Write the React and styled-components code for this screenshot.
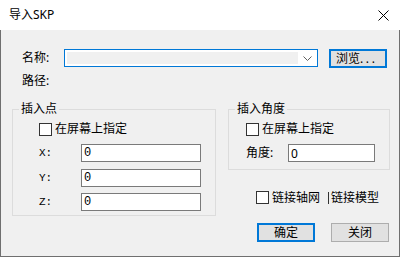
import React from 'react';
import styled, { createGlobalStyle } from 'styled-components';

const Global = createGlobalStyle`
  html, body { margin: 0; padding: 0; background: #ffffff; }
  body {
    font-family: "Noto Sans", "Noto Sans CJK SC", sans-serif;
    font-size: 12px;
    line-height: 16px;
    color: #000;
  }
  * { box-sizing: border-box; }
`;

const Window = styled.div`
  width: 400px;
  height: 257px;
  display: flex;
  flex-direction: column;
  background: #fff;
`;

const TitleBar = styled.div`
  height: 30px;
  flex: none;
  display: flex;
  align-items: center;
  justify-content: space-between;
  padding: 0 11px 0 9px;
  background: #fff;
`;

const Title = styled.div`
  font-size: 12px;
  line-height: 16px;
  margin-top: -1px;
`;

const Body = styled.div`
  flex: 1;
  background: #f0f0f0;
  border: 1px solid #6f6f6f;
  border-top: none;
  display: flex;
  flex-direction: column;
`;

const FileRow = styled.div`
  margin-top: 19px;
  padding-left: 21px;
  display: flex;
  align-items: flex-start;
  height: 19px;
`;

const Label = styled.div`
  width: ${p => p.$w || 42}px;
  flex: none;
  line-height: ${p => p.$lh || 16}px;
  font-family: ${p => (p.$mono ? '"Liberation Mono", "DejaVu Sans Mono", monospace' : 'inherit')};
  font-size: ${p => (p.$mono ? '11px' : '12px')};
`;

const Combo = styled.div`
  width: 254px;
  height: 18px;
  border: 1px solid #0078d7;
  background: #fff;
  display: flex;
  padding: 2px 0 2px 2px;
`;

const ComboField = styled.div`
  flex: 1;
  background: #f0f0f0;
`;

const ComboArrow = styled.div`
  width: 19px;
  display: flex;
  align-items: center;
  justify-content: center;
`;

const Button = styled.div`
  width: 58px;
  height: 19px;
  flex: none;
  display: flex;
  align-items: center;
  justify-content: ${p => (p.$left ? 'flex-start' : 'center')};
  padding-left: ${p => (p.$left ? 5 : 0)}px;
  background: #e1e1e1;
  border: ${p => (p.$focus ? '2px solid #0078d7' : '1px solid #adadad')};
  margin-left: ${p => p.$ml || 0}px;
  line-height: 16px;
`;

const Dots = styled.span`
  letter-spacing: 2.6px;
`;

const PathRow = styled.div`
  margin-top: 5px;
  padding-left: 21px;
  line-height: 16px;
`;

const GroupsRow = styled.div`
  margin-top: 12px;
  padding-left: 11px;
  display: flex;
  align-items: flex-start;
`;

const Group = styled.fieldset`
  margin: 0;
  width: ${p => p.$w}px;
  border: 1px solid #dcdcdc;
  padding: 0;
  min-inline-size: 0;
`;

const Legend = styled.legend`
  margin-left: 6px;
  padding: 0 2px;
  line-height: 16px;
  font-size: 12px;
`;

const GroupContent = styled.div`
  padding: 4px 0 ${p => p.$pb}px ${p => p.$pl}px;
`;

const CheckRow = styled.div`
  display: flex;
  align-items: center;
  height: ${p => p.$h || 16}px;
  margin-top: ${p => p.$mt || 0}px;
  padding-left: ${p => p.$pl || 0}px;
`;

const Box = styled.span`
  width: 13px;
  height: 13px;
  flex: none;
  border: 1px solid #333333;
  background: #fff;
  margin-right: 3px;
`;

const ClippedEdge = styled.span`
  width: 1px;
  height: 12px;
  flex: none;
  background: #333333;
  margin: 0 2px 0 8px;
`;

const FieldRow = styled.div`
  display: flex;
  align-items: center;
  margin-top: ${p => p.$mt}px;
`;

const Input = styled.input`
  width: ${p => p.$w}px;
  height: 18px;
  border: 1px solid #7a7a7a;
  background: #fff;
  padding: 0 0 0 2px;
  margin: 0;
  outline: none;
  font-family: ${p => (p.$mono ? '"Liberation Mono", "DejaVu Sans Mono", monospace' : '"Noto Sans", sans-serif')};
  font-size: 12px;
  color: #000;
`;

const RightColumn = styled.div`
  display: flex;
  flex-direction: column;
  margin-left: 12px;
`;

const ButtonRow = styled.div`
  display: flex;
  margin-top: 18px;
  padding-left: 29px;
`;

const CloseIcon = () => (
  <svg width="11" height="11" viewBox="0 0 11 11">
    <path d="M0.5 0.5 L10.5 10.5 M10.5 0.5 L0.5 10.5" stroke="#000" strokeWidth="1" fill="none" />
  </svg>
);

const Chevron = () => (
  <svg width="9" height="5" viewBox="0 0 9 5">
    <path d="M0.5 0.5 L4.5 4.5 L8.5 0.5" stroke="#606060" strokeWidth="1" fill="none" />
  </svg>
);

export default function App() {
  return (
    <>
      <Global />
      <Window>
        <TitleBar>
          <Title>导入SKP</Title>
          <CloseIcon />
        </TitleBar>
        <Body>
          <FileRow>
            <Label $lh={18}>名称:</Label>
            <Combo>
              <ComboField />
              <ComboArrow><Chevron /></ComboArrow>
            </Combo>
            <Button $focus $left $ml={11}>浏览<Dots>...</Dots></Button>
          </FileRow>
          <PathRow>路径:</PathRow>
          <GroupsRow>
            <Group $w={204}>
              <Legend>插入点</Legend>
              <GroupContent $pl={26} $pb={4}>
                <CheckRow><Box />在屏幕上指定</CheckRow>
                <FieldRow $mt={7}>
                  <Label $mono>X:</Label>
                  <Input $w={120} $mono readOnly defaultValue="0" />
                </FieldRow>
                <FieldRow $mt={7}>
                  <Label $mono>Y:</Label>
                  <Input $w={120} $mono readOnly defaultValue="0" />
                </FieldRow>
                <FieldRow $mt={6}>
                  <Label $mono>Z:</Label>
                  <Input $w={120} $mono readOnly defaultValue="0" />
                </FieldRow>
              </GroupContent>
            </Group>
            <RightColumn>
              <Group $w={162}>
                <Legend>插入角度</Legend>
                <GroupContent $pl={17} $pb={7}>
                  <CheckRow><Box />在屏幕上指定</CheckRow>
                  <FieldRow $mt={7}>
                    <Label>角度:</Label>
                    <Input $w={87} readOnly defaultValue="0" />
                  </FieldRow>
                </GroupContent>
              </Group>
              <CheckRow $h={15} $mt={20} $pl={28}>
                <Box />链接轴网<ClippedEdge />链接模型
              </CheckRow>
              <ButtonRow>
                <Button $focus>确定</Button>
                <Button $ml={16}>关闭</Button>
              </ButtonRow>
            </RightColumn>
          </GroupsRow>
        </Body>
      </Window>
    </>
  );
}
